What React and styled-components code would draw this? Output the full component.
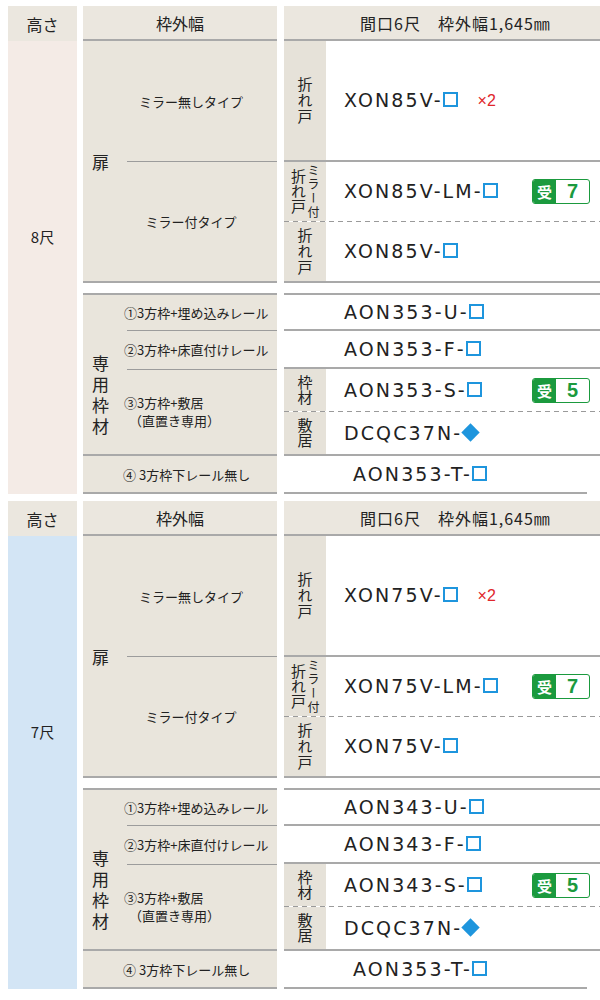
import React from "react";
import styled, { createGlobalStyle } from "styled-components";

const LINE = "#a9a9a9";
const JP = `"Noto Sans CJK JP", "Noto Sans", sans-serif`;
const LATIN = `"DejaVu Sans", "Noto Sans CJK JP", sans-serif`;
const GREEN = "#1b9a3e";
const BLUE = "#1e95dd";

const GlobalStyle = createGlobalStyle`
  body {
    margin: 0;
    background: #fff;
    color: #222;
    font-family: ${JP};
  }
`;

const Page = styled.div`
  width: 592px;
  padding: 6px 0 0 8px;
  display: flex;
  flex-direction: column;
  gap: 7px;
`;

const Section = styled.section`
  display: flex;
  height: 488px;
`;

/* 高さ column */
const HeightCol = styled.div`
  width: 69px;
  display: flex;
  flex-direction: column;
`;

const HeadCell = styled.div`
  height: 35px;
  box-sizing: border-box;
  display: flex;
  align-items: center;
  justify-content: center;
  background: #ebe7df;
  font-size: 16px;
  border-bottom: ${(p) => (p.$line ? `2px solid ${LINE}` : "none")};
`;

const HeightBody = styled.div`
  flex: 1;
  background: ${(p) => p.$tone};
  padding-top: 186px;
  box-sizing: border-box;
  text-align: center;
  font-size: 15px;
  line-height: 20px;
`;

/* 枠外幅 column */
const WidthCol = styled.div`
  width: 194px;
  margin-left: 6px;
  display: flex;
  flex-direction: column;
  gap: 10px;
`;

const Block = styled.div`
  background: #e9e5dc;
  border-top: ${(p) => (p.$top ? `2px solid ${LINE}` : "none")};
`;

const DoorBlock = styled.div`
  height: 242px;
  box-sizing: border-box;
  border-bottom: 2px solid ${LINE};
  display: flex;
`;

const SideLabel = styled.div`
  width: 44px;
  flex: none;
  display: flex;
  align-items: ${(p) => (p.$top ? "flex-start" : "center")};
  padding: ${(p) => (p.$top ? "60px 0 0 9px" : "0 0 0 9px")};
  box-sizing: border-box;
  font-size: 17px;
`;

const SubList = styled.div`
  flex: 1;
  display: flex;
  flex-direction: column;
`;

const DoorItem = styled.div`
  height: ${(p) => p.$h}px;
  box-sizing: border-box;
  border-bottom: ${(p) => (p.$divider ? "1px solid #9c9c9c" : "none")};
  display: flex;
  align-items: center;
  justify-content: center;
  padding-right: 22px;
  font-size: 13px;
`;

const FrameUpper = styled.div`
  height: 161px;
  box-sizing: border-box;
  border-bottom: 2px solid ${LINE};
  display: flex;
`;

const FrameItem = styled.div`
  height: ${(p) => (p.$h ? `${p.$h}px` : "auto")};
  flex: ${(p) => (p.$h ? "none" : 1)};
  box-sizing: border-box;
  border-bottom: ${(p) => (p.$divider ? "1px solid #9c9c9c" : "none")};
  display: flex;
  flex-direction: column;
  justify-content: center;
  font-size: 13px;
  line-height: 18px;
`;

const Shifted = styled.span`
  margin-left: ${(p) => p.$by}px;
`;

const LastItem = styled.div`
  height: 38px;
  box-sizing: border-box;
  border-bottom: 2px solid ${LINE};
  display: flex;
  align-items: center;
  padding-left: 40px;
  font-size: 13px;
`;

/* model column */
const ModelCol = styled.div`
  flex: 1;
  margin-left: 7px;
  display: flex;
  flex-direction: column;
  gap: 10px;
`;

const ModelHead = styled(HeadCell)`
  justify-content: flex-start;
  padding-left: 76px;
  font-size: 16px;
  letter-spacing: 1px;
`;

const ModelBlock = styled.div`
  background: #fff;
  border-top: ${(p) => (p.$top ? `2px solid ${LINE}` : "none")};
`;

const dashed = `repeating-linear-gradient(90deg, #9a9a9a 0 5px, transparent 5px 9px) left bottom / 100% 1px no-repeat`;

const ModelRow = styled.div`
  height: ${(p) => p.$h}px;
  box-sizing: border-box;
  display: flex;
  margin-right: ${(p) => (p.$short ? "13px" : "0")};
  border-bottom: ${(p) => (p.$rule === "solid" ? `2px solid ${LINE}` : "none")};
  padding-bottom: ${(p) => (p.$rule === "dashed" ? "1px" : "0")};
  background: ${(p) => (p.$rule === "dashed" ? dashed : "transparent")};
`;

const RowLabel = styled.div`
  width: 42px;
  flex: none;
  background: ${(p) => (p.$empty ? "transparent" : "#e6e2d9")};
  display: flex;
  align-items: center;
  justify-content: center;
  gap: 1px;
`;

const VText = styled.span`
  writing-mode: vertical-rl;
  font-size: ${(p) => p.$size || 15}px;
  line-height: 1;
  letter-spacing: ${(p) => p.$spacing ?? 1}px;
`;

const ModelCell = styled.div`
  flex: 1;
  display: flex;
  align-items: center;
  padding-left: ${(p) => p.$indent || 18}px;
`;

const Code = styled.span`
  font-family: ${LATIN};
  font-size: 19px;
  letter-spacing: 2.1px;
  line-height: 1;
`;

const Box = styled.span`
  width: 15px;
  height: 15px;
  box-sizing: border-box;
  border: 2px solid ${BLUE};
  margin-top: -2px;
`;

const Diamond = styled.span`
  width: 13px;
  height: 13px;
  background: ${BLUE};
  transform: rotate(45deg);
  margin: -2px 3px 0 2px;
`;

const Times = styled.span`
  margin-left: 20px;
  color: #e0262b;
  font-family: "Liberation Sans", sans-serif;
  font-size: 16px;
`;

const Badge = styled.div`
  margin: 0 10px 0 auto;
  width: 58px;
  height: 25px;
  box-sizing: border-box;
  border: 1.5px solid ${GREEN};
  border-radius: 3px;
  overflow: hidden;
  display: flex;
`;

const BadgeKey = styled.span`
  width: 23px;
  background: ${GREEN};
  color: #fff;
  font-weight: bold;
  font-size: 15px;
  display: flex;
  align-items: center;
  justify-content: center;
`;

const BadgeNum = styled.span`
  flex: 1;
  color: ${GREEN};
  font-family: "Liberation Sans", sans-serif;
  font-weight: bold;
  font-size: 20px;
  display: flex;
  align-items: center;
  justify-content: center;
`;

const sections = [
  {
    tone: "#f4ebe6",
    size: "8尺",
    door: "XON85V",
    frame: ["AON353-U", "AON353-F", "AON353-S", "DCQC37N", "AON353-T"],
  },
  {
    tone: "#d3e5f5",
    size: "7尺",
    door: "XON75V",
    frame: ["AON343-U", "AON343-F", "AON343-S", "DCQC37N", "AON353-T"],
  },
];

function Model({ code, diamond, times, badge, indent }) {
  return (
    <ModelCell $indent={indent}>
      <Code>{code}-</Code>
      {diamond ? <Diamond /> : <Box />}
      {times && <Times>×2</Times>}
      {badge && (
        <Badge>
          <BadgeKey>受</BadgeKey>
          <BadgeNum>{badge}</BadgeNum>
        </Badge>
      )}
    </ModelCell>
  );
}

function TableSection({ data }) {
  return (
    <Section>
      <HeightCol>
        <HeadCell>高さ</HeadCell>
        <HeightBody $tone={data.tone}>{data.size}</HeightBody>
      </HeightCol>

      <WidthCol>
        <Block>
          <HeadCell $line>枠外幅</HeadCell>
          <DoorBlock>
            <SideLabel>扉</SideLabel>
            <SubList>
              <DoorItem $h={121} $divider>ミラー無しタイプ</DoorItem>
              <DoorItem $h={119}>ミラー付タイプ</DoorItem>
            </SubList>
          </DoorBlock>
        </Block>
        <Block $top>
          <FrameUpper>
            <SideLabel $top>
              <VText $size={17} $spacing={4}>専用枠材</VText>
            </SideLabel>
            <SubList>
              <FrameItem $h={36} $divider>
                <Shifted $by={-3}>①3方枠+埋め込みレール</Shifted>
              </FrameItem>
              <FrameItem $h={39} $divider>
                <Shifted $by={-3}>②3方枠+床直付けレール</Shifted>
              </FrameItem>
              <FrameItem>
                <Shifted $by={-3}>③3方枠+敷居</Shifted>
                <Shifted $by={2}>（直置き専用）</Shifted>
              </FrameItem>
            </SubList>
          </FrameUpper>
          <LastItem>④ 3方枠下レール無し</LastItem>
        </Block>
      </WidthCol>

      <ModelCol>
        <ModelBlock>
          <ModelHead $line>間口6尺　枠外幅1,645㎜</ModelHead>
          <ModelRow $h={121} $rule="solid">
            <RowLabel>
              <VText>折れ戸</VText>
            </RowLabel>
            <Model code={data.door} times />
          </ModelRow>
          <ModelRow $h={60} $rule="dashed">
            <RowLabel>
              <VText $spacing={0}>折れ戸</VText>
              <VText $size={12} $spacing={2}>ミラー付</VText>
            </RowLabel>
            <Model code={`${data.door}-LM`} badge="7" />
          </ModelRow>
          <ModelRow $h={61} $rule="solid">
            <RowLabel>
              <VText>折れ戸</VText>
            </RowLabel>
            <Model code={data.door} />
          </ModelRow>
        </ModelBlock>
        <ModelBlock $top>
          <ModelRow $h={36} $rule="solid">
            <RowLabel $empty />
            <Model code={data.frame[0]} />
          </ModelRow>
          <ModelRow $h={38} $rule="solid">
            <RowLabel $empty />
            <Model code={data.frame[1]} />
          </ModelRow>
          <ModelRow $h={43} $rule="dashed">
            <RowLabel>
              <VText $spacing={0}>枠材</VText>
            </RowLabel>
            <Model code={data.frame[2]} badge="5" />
          </ModelRow>
          <ModelRow $h={44} $rule="solid">
            <RowLabel>
              <VText $spacing={0}>敷居</VText>
            </RowLabel>
            <Model code={data.frame[3]} diamond />
          </ModelRow>
          <ModelRow $h={38} $rule="solid" $short>
            <RowLabel $empty />
            <Model code={data.frame[4]} indent={27} />
          </ModelRow>
        </ModelBlock>
      </ModelCol>
    </Section>
  );
}

export default function App() {
  return (
    <>
      <GlobalStyle />
      <Page>
        {sections.map((s) => (
          <TableSection key={s.size} data={s} />
        ))}
      </Page>
    </>
  );
}
